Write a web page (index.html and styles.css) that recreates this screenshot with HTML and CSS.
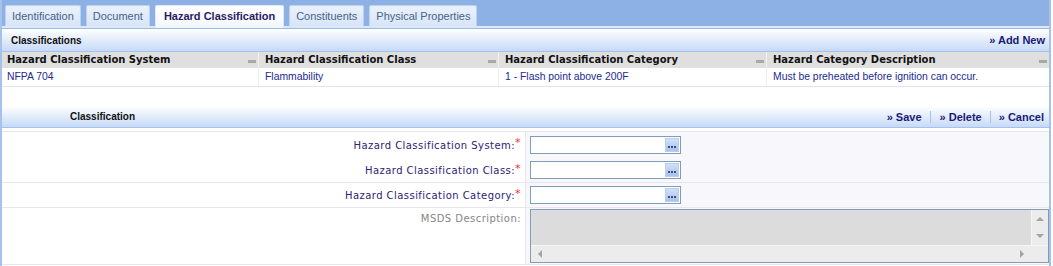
FILE: index.html
```html
<!DOCTYPE html>
<html>
<head lang="en">
    <meta charset="UTF-8">
    <title>Hazard Classification</title>
    <link rel="stylesheet" href="styles.css">
</head>
<body>
<div class="panel">
    <ul class="tabs">
        <li>Identification</li>
        <li>Document</li>
        <li class="active">Hazard Classification</li>
        <li>Constituents</li>
        <li>Physical Properties</li>
    </ul>

    <div class="bar">
        <span class="bar-title">Classifications</span>
        <div class="actions">
            <a href="#">&raquo; Add New</a>
        </div>
    </div>

    <div class="grid">
        <div class="grid-row grid-head">
            <div class="cell">Hazard Classification System<span class="handle"></span></div>
            <div class="cell">Hazard Classification Class<span class="handle"></span></div>
            <div class="cell">Hazard Classification Category<span class="handle"></span></div>
            <div class="cell">Hazard Category Description<span class="handle"></span></div>
        </div>
        <div class="grid-row grid-data">
            <div class="cell">NFPA 704</div>
            <div class="cell">Flammability</div>
            <div class="cell">1 - Flash point above 200F</div>
            <div class="cell">Must be preheated before ignition can occur.</div>
        </div>
    </div>

    <div class="spacer"></div>

    <div class="bar bar-edit">
        <span class="bar-title">Classification</span>
        <div class="actions">
            <a href="#">&raquo; Save</a>
            <a href="#">&raquo; Delete</a>
            <a href="#">&raquo; Cancel</a>
        </div>
    </div>

    <div class="form">
        <div class="group">
            <div class="form-row first">
                <label class="label">Hazard Classification System:<em>*</em></label>
                <div class="field">
                    <div class="lookup"><span class="lookup-text"></span><span class="lookup-btn"><i></i><i></i><i></i></span></div>
                </div>
            </div>
            <div class="form-row">
                <label class="label">Hazard Classification Class:<em>*</em></label>
                <div class="field">
                    <div class="lookup"><span class="lookup-text"></span><span class="lookup-btn"><i></i><i></i><i></i></span></div>
                </div>
            </div>
        </div>
        <div class="group">
            <div class="form-row">
                <label class="label">Hazard Classification Category:<em>*</em></label>
                <div class="field">
                    <div class="lookup"><span class="lookup-text"></span><span class="lookup-btn"><i></i><i></i><i></i></span></div>
                </div>
            </div>
        </div>
        <div class="group">
            <div class="form-row msds">
                <label class="label disabled">MSDS Description:</label>
                <div class="field">
                    <div class="textarea">
                        <div class="ta-body">
                            <div class="ta-text"></div>
                            <div class="vscroll">
                                <span class="arrow up"></span>
                                <span class="arrow down"></span>
                            </div>
                        </div>
                        <div class="ta-foot">
                            <div class="hscroll">
                                <span class="arrow left"></span>
                                <span class="arrow right"></span>
                            </div>
                            <div class="corner"></div>
                        </div>
                    </div>
                </div>
            </div>
        </div>
    </div>
</div>
</body>
</html>
```

FILE: styles.css
```css
* {
    margin: 0;
    padding: 0;
    box-sizing: border-box;
}

ul, ol {
    list-style: none;
}

body {
    font-family: "Liberation Sans", Arial, sans-serif;
    font-size: 11px;
    background: #fff;
}

a {
    text-decoration: none;
}

.panel {
    width: 1051px;
    height: 266px;
    border-left: 2px solid #a7c2ea;
    border-right: 2px solid #a7c2ea;
    overflow: hidden;
}

/* tabs */
.tabs {
    display: flex;
    gap: 5px;
    height: 28px;
    padding: 5px 0 0 3px;
    background: #8db1e4;
    border-bottom: 2px solid #dde7f6;
}

.tabs li {
    height: 21px;
    line-height: 20px;
    padding: 0 6px;
    color: #4a6288;
    background: linear-gradient(#eaf1fc, #d8e5f8);
    border: 1px solid #bdd2f0;
    border-bottom: 0;
    border-radius: 2px 2px 0 0;
    cursor: pointer;
}

.tabs li.active {
    height: 23px;
    padding: 0 8px;
    font-weight: bold;
    color: #2b1b5e;
    background: linear-gradient(#ffffff, #f2f7fd);
    border-color: #dfe9f7;
}

/* header bars */
.bar {
    display: flex;
    align-items: center;
    height: 24px;
    padding: 0 4px 0 9px;
    background: linear-gradient(#ffffff, #c6daf7);
    border-top: 1px solid #99bbe8;
    border-bottom: 1px solid #a6c2ea;
}

.bar-title {
    font-weight: bold;
    font-size: 10px;
    color: #111;
}

.actions {
    display: flex;
    margin-left: auto;
}

.actions a {
    font-weight: bold;
    color: #1a1a78;
    border-left: 1px solid #a9c4ea;
}

.actions a:first-child {
    border-left: 0;
}

.bar-edit {
    height: 22px;
    padding-left: 68px;
    border-top: 0;
}

.bar-edit .actions a {
    padding: 0 8px 0 9px;
}

.bar-edit .actions a:first-child {
    padding: 0 8px 0 0;
}

.bar-edit .actions a:last-child {
    padding: 0 1px 0 8px;
}

/* grid */
.grid-row {
    display: grid;
    grid-template-columns: 257px 240px 268px 1fr;
}

.grid-head {
    height: 16px;
    background: #dfdfdf;
    font-family: "DejaVu Sans", Verdana, sans-serif;
    font-weight: bold;
    font-size: 10px;
    color: #111;
}

.grid-head .cell {
    position: relative;
    line-height: 16px;
    padding-left: 5px;
    border-right: 1px solid #f2f2f2;
}

.grid-head .cell + .cell {
    padding-left: 6px;
}

.handle {
    position: absolute;
    right: 2px;
    top: 8px;
    width: 8px;
    height: 3px;
    background: #aaa9a0;
}

.grid-data {
    height: 19px;
    font-size: 10.4px;
    color: #222a92;
    border-bottom: 1px solid #e3e3ec;
}

.grid-data .cell {
    line-height: 18px;
    padding-left: 5px;
    border-right: 1px solid #ececf2;
}

.grid-data .cell + .cell {
    padding-left: 6px;
}

.grid .cell:last-child {
    border-right: 0;
}

.spacer {
    height: 19px;
}

/* form */
.form {
    margin-top: 3px;
    border-top: 1px solid #e6e6ee;
}

.group {
    border-bottom: 1px solid #e6e6ee;
}

.form-row {
    display: flex;
    height: 24px;
}

.form-row.first {
    height: 26px;
}

.label {
    width: 524px;
    padding-right: 4px;
    text-align: right;
    font-family: "DejaVu Sans", Verdana, sans-serif;
    font-size: 10px;
    letter-spacing: 0.45px;
    color: #2e2276;
    border-right: 1px solid #e6e6ee;
    display: flex;
    align-items: center;
    justify-content: flex-end;
}

.label em {
    font-style: normal;
    font-size: 11px;
    color: #ff2a2a;
    align-self: flex-start;
    margin-top: 4px;
}

.form-row.msds .label {
    align-items: flex-start;
    padding-top: 5px;
}

.label.disabled {
    color: #858585;
}

.field {
    flex: 1;
    display: flex;
    align-items: center;
    padding-left: 4px;
    background: #f8f8fc;
}

.lookup {
    display: flex;
    width: 151px;
    height: 18px;
    border: 1px solid #7f9db9;
    background: #fff;
}

.lookup-text {
    flex: 1;
    border-right: 1px solid #fff;
}

.lookup-btn {
    display: flex;
    align-items: center;
    justify-content: center;
    gap: 1px;
    width: 14px;
    height: 14px;
    margin: 1px 1px 0 0;
    background: linear-gradient(#d2e0f8, #a9c2ee);
    border: 1px solid #b9cdee;
}

.lookup-btn i {
    width: 2px;
    height: 2px;
    margin-top: 3px;
    background: #3d4f80;
}

.form-row.msds {
    height: 56px;
}

.textarea {
    flex: 1;
    height: 54px;
    border: 1px solid #7f9db9;
    background: #dcdcdc;
    display: flex;
    flex-direction: column;
}

.ta-body {
    flex: 1;
    display: flex;
}

.ta-text {
    flex: 1;
}

.vscroll, .hscroll {
    position: relative;
    background: #ececec;
}

.vscroll {
    width: 17px;
    border-left: 1px solid #f6f6f6;
}

.ta-foot {
    height: 17px;
    display: flex;
    border-top: 1px solid #f6f6f6;
}

.hscroll {
    flex: 1;
}

.corner {
    width: 17px;
    background: #ececec;
}

.arrow {
    position: absolute;
    width: 0;
    height: 0;
    border: 4px solid transparent;
}

.arrow.up {
    left: 4px;
    top: 3px;
    border-bottom-color: #a3a3a3;
}

.arrow.down {
    left: 4px;
    bottom: 3px;
    border-top-color: #a3a3a3;
}

.arrow.left {
    left: 3px;
    top: 4px;
    border-right-color: #a3a3a3;
}

.arrow.right {
    right: 3px;
    top: 4px;
    border-left-color: #a3a3a3;
}
```
